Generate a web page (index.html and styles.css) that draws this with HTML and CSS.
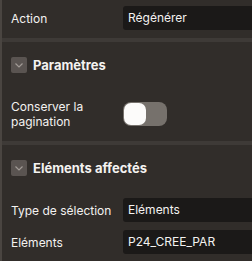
FILE: index.html
```html
<!doctype html>
<html>
  <head>
    <title>Propriétés</title>
    <meta name="viewport" content="width=device-width, initial-scale=1.0" />
    <link rel="stylesheet" href="styles.css">
  </head>
  <body>
    <div class="panel">
      <div class="row row-first">
        <label>Action</label>
        <div class="field">Régénérer</div>
      </div>

      <div class="group">
        <div class="group-head">
          <span class="chevron">
            <svg width="16" height="16" viewBox="0 0 16 16"><path d="M4.5 6.5 L8 10 L11.5 6.5" fill="none" stroke="#a19b96" stroke-width="1.2"/></svg>
          </span>
          <h3>Paramètres</h3>
        </div>
        <div class="row row-toggle">
          <label>Conserver la<br>pagination</label>
          <span class="switch"><span class="knob"></span></span>
        </div>
      </div>

      <div class="group">
        <div class="group-head">
          <span class="chevron">
            <svg width="16" height="16" viewBox="0 0 16 16"><path d="M4.5 6.5 L8 10 L11.5 6.5" fill="none" stroke="#a19b96" stroke-width="1.2"/></svg>
          </span>
          <h3>Eléments affectés</h3>
        </div>
        <div class="row row-sel">
          <label>Type de sélection</label>
          <div class="field">Eléments</div>
        </div>
        <div class="row">
          <label>Eléments</label>
          <div class="field">P24_CREE_PAR</div>
        </div>
      </div>
    </div>
  </body>
</html>
```

FILE: styles.css
```css
body {
  margin: 0;
  padding: 0;
  background-color: #312d2a;
  color: #f4f2f0;
  font-family: Inter, "Noto Sans", sans-serif;
  font-size: 12px;
  overflow: hidden;
}

.panel {
  width: 252px;
  min-height: 261px;
  border-left: 2px solid #4a4541;
  box-sizing: border-box;
  overflow: hidden;
}

.row {
  display: flex;
  align-items: center;
  margin-right: -8px;
}

.row label {
  width: 121px;
  padding-left: 9px;
  box-sizing: border-box;
  flex: none;
  line-height: 15px;
}

.field {
  flex: 1;
  height: 24px;
  line-height: 24px;
  padding-left: 5px;
  background-color: #1b1918;
  border-radius: 3px;
}

.row-first {
  padding: 6px 0 8px;
}

.group {
  border-top: 4px solid #3e3a37;
}

.group-head {
  display: flex;
  align-items: center;
  padding: 15px 0 0 9px;
}

.chevron {
  width: 16px;
  height: 16px;
  background-color: #5a5451;
  border-radius: 2px;
  display: flex;
}

.group-head h3 {
  margin: 0 0 0 6px;
  font-size: 13px;
  font-weight: bold;
  line-height: 16px;
}

.row-toggle {
  padding: 26px 0 12px;
}

.switch {
  width: 44px;
  height: 24px;
  border-radius: 8px;
  background-color: #76716c;
  padding: 1px;
  box-sizing: border-box;
  display: flex;
}

.knob {
  width: 22px;
  height: 22px;
  border-radius: 7px;
  background-color: #fcfbfa;
}

.row-sel {
  padding-top: 22px;
  margin-bottom: 8px;
}
```
